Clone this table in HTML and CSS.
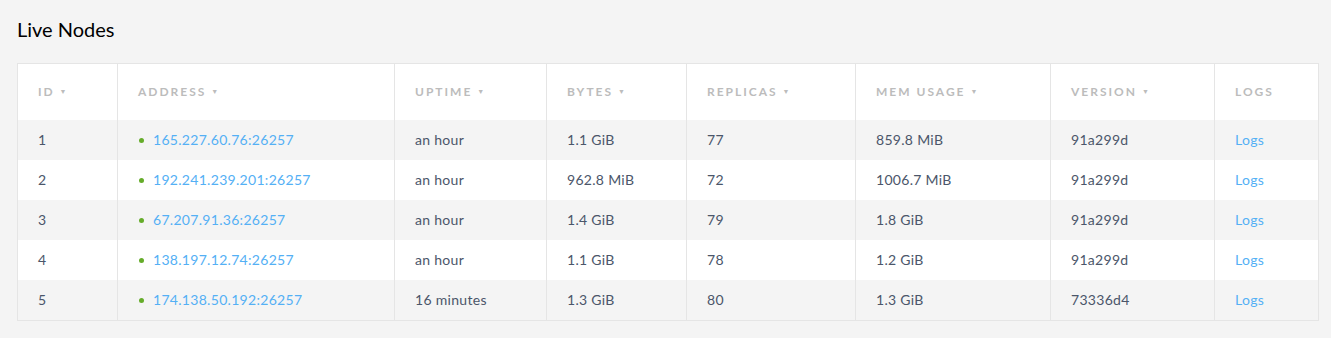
FILE: index.html
```html
<!DOCTYPE html>
<html>
<head>
<meta charset="utf-8">
<link rel="stylesheet" href="styles.css">
</head>
<body>
<div class="page">
  <h1 class="title">Live Nodes</h1>
  <table class="nodes">
    <colgroup>
      <col class="c-id"><col class="c-addr"><col class="c-up"><col class="c-bytes"><col class="c-rep"><col class="c-mem"><col class="c-ver"><col class="c-logs">
    </colgroup>
    <thead>
      <tr>
        <th>ID <span class="caret">▼</span></th>
        <th>Address <span class="caret">▼</span></th>
        <th>Uptime <span class="caret">▼</span></th>
        <th>Bytes <span class="caret">▼</span></th>
        <th>Replicas <span class="caret">▼</span></th>
        <th>Mem Usage <span class="caret">▼</span></th>
        <th>Version <span class="caret">▼</span></th>
        <th>Logs</th>
      </tr>
    </thead>
    <tbody>
      <tr>
        <td>1</td><td><span class="dot"></span><a class="link">165.227.60.76:26257</a></td><td>an hour</td><td>1.1 GiB</td><td>77</td><td>859.8 MiB</td><td>91a299d</td><td><a class="link">Logs</a></td>
      </tr>
      <tr>
        <td>2</td><td><span class="dot"></span><a class="link">192.241.239.201:26257</a></td><td>an hour</td><td>962.8 MiB</td><td>72</td><td>1006.7 MiB</td><td>91a299d</td><td><a class="link">Logs</a></td>
      </tr>
      <tr>
        <td>3</td><td><span class="dot"></span><a class="link">67.207.91.36:26257</a></td><td>an hour</td><td>1.4 GiB</td><td>79</td><td>1.8 GiB</td><td>91a299d</td><td><a class="link">Logs</a></td>
      </tr>
      <tr>
        <td>4</td><td><span class="dot"></span><a class="link">138.197.12.74:26257</a></td><td>an hour</td><td>1.1 GiB</td><td>78</td><td>1.2 GiB</td><td>91a299d</td><td><a class="link">Logs</a></td>
      </tr>
      <tr>
        <td>5</td><td><span class="dot"></span><a class="link">174.138.50.192:26257</a></td><td>16 minutes</td><td>1.3 GiB</td><td>80</td><td>1.3 GiB</td><td>73336d4</td><td><a class="link">Logs</a></td>
      </tr>
    </tbody>
  </table>
</div>
</body>
</html>
```
FILE: styles.css
```css
html, body {
  margin: 0;
  padding: 0;
  background: #f4f4f4;
  font-family: Lato, "Open Sans", sans-serif;
}
.page {
  padding: 16px 13px 0 17px;
}
.title {
  margin: 0 0 21px 0;
  font-size: 20px;
  font-weight: 400;
  color: #000;
  line-height: 26px;
}
.nodes {
  border-collapse: collapse;
  table-layout: fixed;
  width: 1302px;
  background: #fff;
  border: 1px solid #e5e5e5;
}
.c-id { width: 100px; }
.c-addr { width: 277px; }
.c-up { width: 152px; }
.c-bytes { width: 140px; }
.c-rep { width: 169px; }
.c-mem { width: 195px; }
.c-ver { width: 164px; }
.c-logs { width: 104px; }
th, td {
  border-left: 1px solid #e5e5e5;
  border-right: 1px solid #e5e5e5;
  text-align: left;
  padding: 0 0 0 20px;
  white-space: nowrap;
}
th {
  height: 54px;
  padding-bottom: 2px;
  font-size: 12px;
  font-weight: 700;
  letter-spacing: 2px;
  text-transform: uppercase;
  color: #bcbcbc;
  vertical-align: middle;
}
.caret {
  font-size: 7px;
  letter-spacing: 0;
  margin-left: 0;
  vertical-align: 2px;
}
td {
  height: 38px;
  padding-bottom: 2px;
  font-size: 14px;
  letter-spacing: 0.3px;
  color: #4b566a;
}
tbody tr:nth-child(odd) td {
  background: #f4f4f4;
}
.link {
  color: #54b0f5;
  text-decoration: none;
}
.dot {
  display: inline-block;
  width: 5px;
  height: 5px;
  border-radius: 50%;
  background: #65ac2a;
  margin: 0 9px 0 1px;
  vertical-align: 2px;
}
```
